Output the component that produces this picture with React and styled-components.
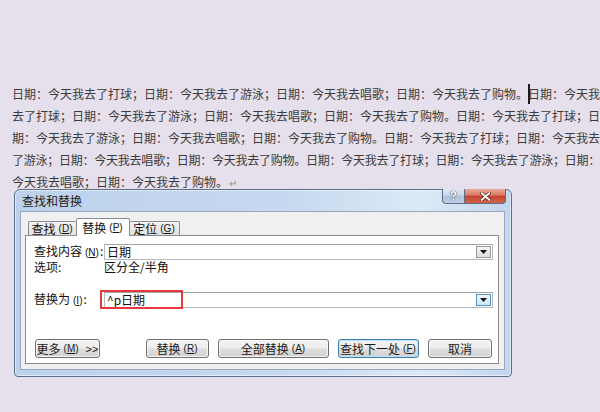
import React from 'react';
import styled, { createGlobalStyle } from 'styled-components';

const GlobalStyle = createGlobalStyle`
html, body { margin:0; padding:0; }
body {
  background:#e6e0ec;
  font-family:"Noto Sans CJK SC", "Liberation Sans", sans-serif;
}
`;

const Page = styled.div`
width:600px;
height:412px;
overflow:hidden;
box-sizing:border-box;
padding:83px 0 0 12px;
`;

const Doc = styled.div`
width:588px;
font-size:12px;
line-height:22px;
color:#3a3a3a;
`;

const Line = styled.div`
text-align:${props => props.$last ? 'left' : 'justify'};
text-align-last:${props => props.$last ? 'left' : 'justify'};
letter-spacing:${props => props.$tight ? '-0.3px' : '0'};
white-space:nowrap;
`;

const Caret = styled.span`
position:relative;
&::after{
  content:"";
  position:absolute;
  left:0;
  top:-1px;
  width:2px;
  height:20px;
  background:#1a1a1a;
}
`;

const Pilcrow = styled.span`
color:#8a8a8a;
font-size:10px;
margin-left:1px;
`;

const Dialog = styled.div`
margin:-5px 0 0 2px;
width:498px;
height:188px;
box-sizing:border-box;
border:1px solid #5d6e88;
border-radius:6px 6px 4px 4px;
background:linear-gradient(to right, #bcd1ec 0%, #c6d9f0 55%, #dce9f7 82%, #c1d5ee 100%);
box-shadow:inset 0 0 0 1px rgba(255,255,255,.5);
display:flex;
flex-direction:column;
`;

const TitleBar = styled.div`
height:21px;
display:flex;
align-items:flex-start;
padding-left:7px;
`;

const Title = styled.span`
font-size:12px;
line-height:22px;
color:#1b1b1b;
`;

const CaptionGroup = styled.div`
margin-left:auto;
margin-right:5px;
margin-top:-1px;
display:flex;
`;

const CaptionButton = styled.div`
width:${props => props.$w}px;
height:15px;
box-sizing:border-box;
border:1px solid #5f6f88;
border-top:none;
border-left:${props => props.$close ? 'none' : '1px solid #5f6f88'};
border-radius:${props => props.$close ? '0 0 4px 0' : '0 0 0 4px'};
background:${props => props.$close
  ? 'linear-gradient(#e9a999 0%, #d87763 45%, #c2432d 50%, #d2644c 100%)'
  : 'linear-gradient(#dfe9f5 0%, #c6d6ea 45%, #aec2dc 50%, #bccde3 100%)'};
display:flex;
align-items:center;
justify-content:center;
font-family:"Liberation Sans", sans-serif;
font-weight:bold;
font-size:12px;
color:#fff;
text-shadow:0 0 1px #333, 0 0 1px #333;
`;

const Client = styled.div`
flex:1;
margin:0 6px 6px 5px;
background:#f0f0f0;
border:1px solid #97a7bd;
padding:6px 5px 5px 4px;
display:flex;
flex-direction:column;
`;

const TabRow = styled.div`
display:flex;
align-items:flex-end;
padding-left:3px;
margin-bottom:-1px;
position:relative;
z-index:1;
`;

const Tab = styled.div`
width:${props => props.$w}px;
height:${props => props.$active ? 18 : 14}px;
margin-bottom:${props => props.$active ? 0 : 1}px;
box-sizing:border-box;
border:1px solid #898c95;
border-bottom:none;
border-left:${props => props.$active ? '1px solid #898c95' : props.$first ? '1px solid #898c95' : 'none'};
border-right:${props => props.$active || props.$lastTab ? '1px solid #898c95' : 'none'};
border-radius:2px 2px 0 0;
background:${props => props.$active ? '#fff' : 'linear-gradient(#f3f3f3, #e1e1e1)'};
display:flex;
align-items:center;
justify-content:center;
font-size:12px;
color:#111;
`;

const Panel = styled.div`
flex:1;
background:#fff;
border:1px solid #898c95;
padding:7px 5px 0 8px;
display:flex;
flex-direction:column;
`;

const Row = styled.div`
display:grid;
grid-template-columns:70px 1fr;
align-items:center;
height:16px;
margin-top:${props => props.$gap || 0}px;
font-size:12px;
color:#111;
`;

const Label = styled.span`
line-height:16px;
`;

const Key = styled.span`
font-family:"Liberation Sans", sans-serif;
font-size:10px;
margin:0 1px 0 3px;
`;

const InputWrap = styled.div`
position:relative;
height:16px;
`;

const Combo = styled.div`
height:16px;
box-sizing:border-box;
border:1px solid #b5b8bf;
border-top-color:#9fa2a8;
background:#fff;
display:flex;
align-items:center;
padding:0 1px 0 2px;
`;

const ComboText = styled.span`
flex:1;
font-size:12px;
line-height:14px;
color:#111;
`;

const DropButton = styled.div`
width:15px;
height:12px;
box-sizing:border-box;
border:1px solid ${props => props.$hot ? '#5a8ec1' : '#979797'};
background:${props => props.$hot
  ? 'linear-gradient(#eef8fe, #c9e9fb)'
  : 'linear-gradient(#f6f6f6, #dcdcdc)'};
display:flex;
align-items:center;
justify-content:center;
`;

const RedMark = styled.div`
position:absolute;
left:-4px;
top:-2px;
width:83px;
height:19px;
box-sizing:border-box;
border:2px solid #e5393d;
`;

const ButtonRow = styled.div`
display:flex;
margin-top:32px;
padding-left:1px;
`;

const Button = styled.div`
width:${props => props.$w}px;
margin-left:${props => props.$ml || 0}px;
height:19px;
box-sizing:border-box;
border:1px solid ${props => props.$default ? '#3c7fb1' : '#707070'};
border-radius:3px;
background:linear-gradient(#f4f4f4 0%, #ececec 48%, #dddddd 52%, #d2d2d2 100%);
box-shadow:${props => props.$default ? 'inset 0 0 0 1px #b9e3f9' : 'inset 0 0 0 1px rgba(255,255,255,.7)'};
display:flex;
align-items:center;
justify-content:center;
font-size:12px;
color:#1a1a1a;
`;

const Chevrons = styled.span`
font-family:"Liberation Sans", sans-serif;
font-size:11px;
margin-left:6px;
`;

const Arrow = () => (
  <svg width="7" height="4" viewBox="0 0 7 4">
    <path d="M0 0 H7 L3.5 4 Z" fill="#111" />
  </svg>
);

const A = '日期：今天我去了打球；';

const App = () => {
  return <Page>
    <GlobalStyle />
    <Doc>
      <Line>日期：今天我去了打球；日期：今天我去了游泳；日期：今天我去唱歌；日期：今天我去了购物。<Caret />日期：今天我</Line>
      <Line>去了打球；日期：今天我去了游泳；日期：今天我去唱歌；日期：今天我去了购物。{A}日</Line>
      <Line>期：今天我去了游泳；日期：今天我去唱歌；日期：今天我去了购物。{A}日期：今天我去</Line>
      <Line $tight>了游泳；日期：今天我去唱歌；日期：今天我去了购物。{A}日期：今天我去了游泳；日期：</Line>
      <Line $last>今天我去唱歌；日期：今天我去了购物。<Pilcrow>↵</Pilcrow></Line>
    </Doc>
    <Dialog>
      <TitleBar>
        <Title>查找和替换</Title>
        <CaptionGroup>
          <CaptionButton $w={23}>?</CaptionButton>
          <CaptionButton $w={41} $close>
            <svg width="11" height="9" viewBox="0 0 11 9">
              <path d="M1.5 1 L9.5 8 M9.5 1 L1.5 8" stroke="#5a2218" strokeWidth="3.2" strokeLinecap="round" />
              <path d="M1.5 1 L9.5 8 M9.5 1 L1.5 8" stroke="#fff" strokeWidth="1.8" strokeLinecap="round" />
            </svg>
          </CaptionButton>
        </CaptionGroup>
      </TitleBar>
      <Client>
        <TabRow>
          <Tab $w={48} $first>查找<Key>(<u>D</u>)</Key></Tab>
          <Tab $w={54} $active>替换<Key>(<u>P</u>)</Key></Tab>
          <Tab $w={50} $lastTab>定位<Key>(<u>G</u>)</Key></Tab>
        </TabRow>
        <Panel>
          <Row>
            <Label>查找内容<Key>(<u>N</u>)</Key>:</Label>
            <InputWrap>
              <Combo>
                <ComboText>日期</ComboText>
                <DropButton><Arrow /></DropButton>
              </Combo>
            </InputWrap>
          </Row>
          <Row>
            <Label>选项:</Label>
            <Label>区分全/半角</Label>
          </Row>
          <Row $gap={16}>
            <Label>替换为<Key>(<u>I</u>)</Key>:</Label>
            <InputWrap>
              <Combo>
                <ComboText>^p日期</ComboText>
                <DropButton $hot><Arrow /></DropButton>
              </Combo>
              <RedMark />
            </InputWrap>
          </Row>
          <ButtonRow>
            <Button $w={65}>更多<Key>(<u>M</u>)</Key><Chevrons>&gt;&gt;</Chevrons></Button>
            <Button $w={63} $ml={46}>替换<Key>(<u>R</u>)</Key></Button>
            <Button $w={111} $ml={9}>全部替换<Key>(<u>A</u>)</Key></Button>
            <Button $w={81} $ml={9} $default>查找下一处<Key>(<u>F</u>)</Key></Button>
            <Button $w={64} $ml={9}>取消</Button>
          </ButtonRow>
        </Panel>
      </Client>
    </Dialog>
  </Page>
}

export default App;
